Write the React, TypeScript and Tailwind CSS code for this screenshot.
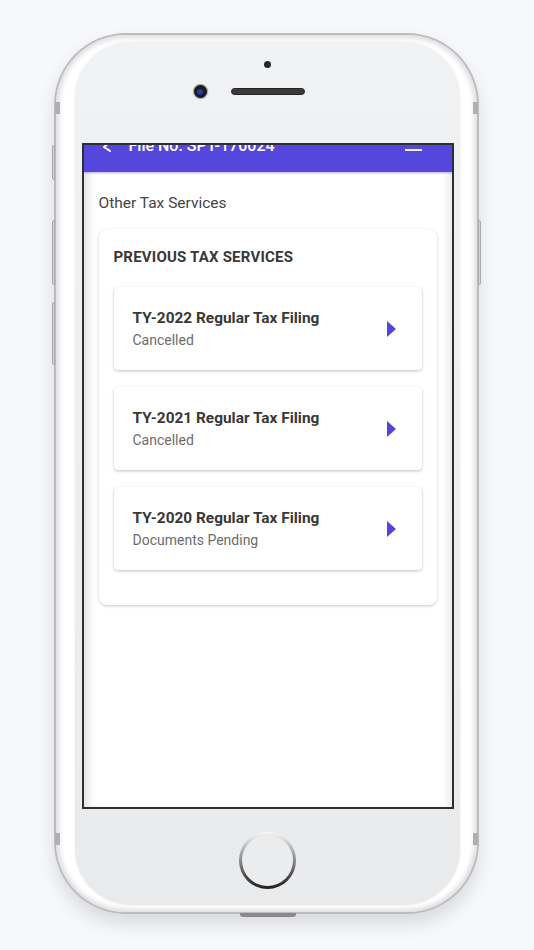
import React from "react";

const items = [
  { title: "TY-2022 Regular Tax Filing", status: "Cancelled" },
  { title: "TY-2021 Regular Tax Filing", status: "Cancelled" },
  { title: "TY-2020 Regular Tax Filing", status: "Documents Pending" },
];

export default function App() {
  return (
    <div
      className="w-[534px] h-[950px] bg-[#f7f8fc] overflow-hidden pt-[33px] pl-[54px]"
      style={{ fontFamily: "Roboto, 'Noto Sans', sans-serif" }}
    >
      <div className="relative w-[425px] h-[881px] rounded-[72px] bg-[#bcbcbe] p-[2px] shadow-[0_10px_18px_rgba(0,0,0,0.12)]">
        {/* side buttons */}
        <div className="absolute left-[-2px] top-[112px] w-[3px] h-[35px] rounded-l-[2px] bg-[#d6d6d8] border border-[#a9a9ab]" />
        <div className="absolute left-[-2px] top-[187px] w-[3px] h-[65px] rounded-l-[2px] bg-[#d6d6d8] border border-[#a9a9ab]" />
        <div className="absolute left-[-2px] top-[269px] w-[3px] h-[63px] rounded-l-[2px] bg-[#d6d6d8] border border-[#a9a9ab]" />
        <div className="absolute right-[-2px] top-[187px] w-[3px] h-[65px] rounded-r-[2px] bg-[#d6d6d8] border border-[#a9a9ab]" />
        {/* antenna bands */}
        <div className="absolute left-[1px] top-[69px] w-[5px] h-[12px] bg-[#b0b0b2]" />
        <div className="absolute right-[1px] top-[69px] w-[5px] h-[12px] bg-[#b0b0b2]" />
        <div className="absolute left-[1px] top-[800px] w-[5px] h-[12px] bg-[#b0b0b2]" />
        <div className="absolute right-[1px] top-[800px] w-[5px] h-[12px] bg-[#b0b0b2]" />
        {/* lightning port */}
        <div className="absolute left-[186px] bottom-[-3px] w-[56px] h-[4px] rounded-b-[3px] bg-[#8a8a8c]" />

        <div className="w-full h-full rounded-[70px] bg-white shadow-[inset_0_0_5px_3px_#dedee0] pt-[7px] pb-[7px] pl-[19px] pr-[17px]">
          <div className="w-full h-full rounded-[56px] bg-gradient-to-b from-[#f1f2f4] to-[#e9eaec] shadow-[0_0_2px_rgba(0,0,0,0.12)] flex flex-col items-center">
            {/* top sensors */}
            <div className="h-[101px] w-full flex flex-col items-center pt-[19px]">
              <div className="w-[7px] h-[7px] rounded-full bg-[#262626]" />
              <div className="mt-[17px] flex items-center gap-[24px]">
                <div className="w-[13px] h-[13px] rounded-full bg-[#1b1b1f] flex items-center justify-center shadow-[0_0_1px_1px_#9a9a9a]">
                  <div className="w-[6px] h-[6px] rounded-full bg-[#1f3f9c]" />
                </div>
                <div className="w-[74px] h-[7px] rounded-full bg-[#3a3a3c] border border-[#222]" />
                <div className="w-[13px] h-[13px]" />
              </div>
            </div>

            {/* screen */}
            <div className="w-[372px] h-[666px] border-[2px] border-[#2f2f31] bg-white overflow-hidden flex flex-col relative">
              <div className="h-[27px] shrink-0 bg-[#5547dd] overflow-hidden flex items-start pl-[18px] pr-[30px] shadow-[0_1px_2px_rgba(84,70,220,0.4)] relative z-10">
                <svg width="10" height="10" viewBox="0 0 10 10" className="mt-[-3px] mr-[17px] shrink-0">
                  <path d="M8 0 L2 5 M2 5 L8 9" stroke="#ffffff" strokeWidth="2" fill="none" strokeLinecap="round" />
                </svg>
                <span className="text-white text-[16px] leading-none font-medium mt-[-7px]">
                  File No. SPT-170024
                </span>
                <div className="ml-auto mt-[4px] w-[17px] h-[2px] bg-white/90" />
              </div>
              <div className="flex-1 px-[15px] pt-[21px] shadow-[inset_10px_0_10px_-6px_rgba(0,0,0,0.13),inset_-8px_0_10px_-6px_rgba(0,0,0,0.12)]">
                <div className="text-[15.5px] leading-[20px] text-[#454545]">Other Tax Services</div>
                <div className="mt-[16px] bg-white rounded-[8px] shadow-[0_1px_3px_rgba(0,0,0,0.22)] px-[15px] pt-[18px] pb-[35px]">
                  <div className="text-[15px] leading-[20px] font-bold text-[#383838] tracking-[0.2px]">
                    PREVIOUS TAX SERVICES
                  </div>
                  <div className="mt-[20px] flex flex-col gap-[17px]">
                    {items.map((it) => (
                      <div
                        key={it.title}
                        className="h-[83px] bg-white rounded-[4px] shadow-[0_1px_3px_rgba(0,0,0,0.25)] flex items-center pl-[19px] pr-[26px]"
                      >
                        <div className="flex-1">
                          <div className="text-[15.4px] leading-[20px] font-bold text-[#383838]">{it.title}</div>
                          <div className="mt-[3px] text-[14px] leading-[18px] text-[#6d6d6d]">{it.status}</div>
                        </div>
                        <svg width="9" height="16" viewBox="0 0 9 16" className="shrink-0">
                          <path d="M0 0 L9 8 L0 16 Z" fill="#5444dc" />
                        </svg>
                      </div>
                    ))}
                  </div>
                </div>
              </div>
            </div>

            {/* home button */}
            <div className="mt-[23px] w-[57px] h-[57px] rounded-full bg-gradient-to-b from-[#f7f7f7] via-[#8a8a8a] to-[#1e1e1e] p-[3px]">
              <div className="w-full h-full rounded-full bg-[#ebecee]" />
            </div>
          </div>
        </div>
      </div>
    </div>
  );
}
